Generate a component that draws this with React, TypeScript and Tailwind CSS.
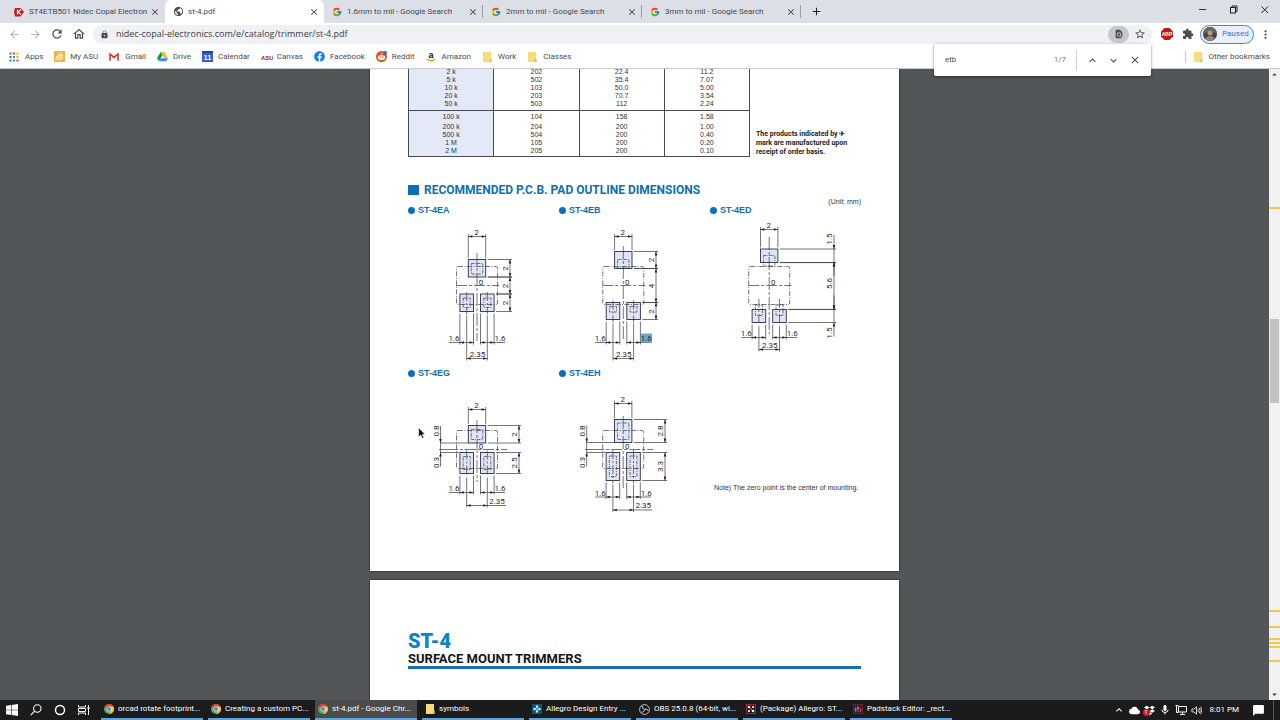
import type { ReactNode } from 'react';
import {
  MdArrowBack,
  MdArrowForward,
  MdRefresh,
  MdOutlineHome,
  MdLock,
  MdStarBorder,
  MdExtension,
  MdMoreVert,
  MdFindInPage,
  MdClose,
  MdAdd,
  MdExpandLess,
  MdExpandMore,
  MdCloud,
  MdMic,
  MdArrowDropUp,
  MdArrowDropDown,
  MdPublic,
  MdChatBubble,
} from 'react-icons/md';
import { FcGoogle } from 'react-icons/fc';
import { FaFacebook, FaDropbox } from 'react-icons/fa';

const UI = "font-['Roboto','Open_Sans',sans-serif]";
const NARROW = "font-['Roboto','Liberation_Sans',sans-serif]";

/* ---------- small icons ---------- */

function ChromeIcon() {
  return (
    <svg viewBox="0 0 24 24" className="size-[10px] shrink-0">
      <circle cx="12" cy="12" r="12" fill="#4caf50" />
      <path d="M12 12 1.6 6A12 12 0 0 1 22.4 6z" fill="#ea4335" />
      <path d="M12 6h10.4A12 12 0 0 1 12 24l5.2-9z" fill="#fbc02d" />
      <path d="M1.6 6 7 15l5-3V6z" fill="#ea4335" />
      <circle cx="12" cy="12" r="6" fill="#fff" />
      <circle cx="12" cy="12" r="4.6" fill="#4285f4" />
    </svg>
  );
}

function FolderIcon() {
  return (
    <svg viewBox="0 0 10 10" className="size-[10px] shrink-0">
      <path d="M1 0h8v6.5l.5.5v3H1z" fill="#f7dc7c" />
      <path d="M7.5 10V7.5L9.500 6.500V10z" fill="#e5bd4b" />
    </svg>
  );
}

function AppsIcon() {
  const colors = ['#db4437', '#db4437', '#f4b400', '#0f9d58', '#4285f4', '#f4b400', '#0f9d58', '#4285f4', '#db4437'];
  return (
    <svg viewBox="0 0 10 10" className="size-[10px] shrink-0">
      {colors.map((c, i) => (
        <rect key={i} x={0.5 + (i % 3) * 3.5} y={0.5 + Math.floor(i / 3) * 3.5} width="2" height="2" fill={c} />
      ))}
    </svg>
  );
}

function AsuIcon() {
  return (
    <svg viewBox="0 0 11 11" className="size-[11px] shrink-0">
      <rect width="11" height="11" rx="1" fill="#f0b43c" />
      <path d="M1.500 8.500 6 1.500M3 9.500 8 2M5 9l4-5M2 6l7-2M6 9.500 9.500 6" stroke="#fff" strokeWidth=".9" fill="none" />
    </svg>
  );
}

function GmailIcon() {
  return (
    <svg viewBox="0 0 10 10" className="size-[10px] shrink-0">
      <rect x=".5" y="1.500" width="9" height="7" fill="#f5f5f5" />
      <path d="M1 8.800V2l4 3.400L9 2v6.800" stroke="#d93025" strokeWidth="1.500" fill="none" />
    </svg>
  );
}

function DriveIcon() {
  return (
    <svg viewBox="0 0 24 22" className="size-[11px] shrink-0">
      <path d="M8 1h8l8 14h-8z" fill="#fbbc05" />
      <path d="M8 1 0 15l4 6.500L12 8z" fill="#0f9d58" />
      <path d="M8 15h16l-4 6.500H4z" fill="#4285f4" />
    </svg>
  );
}

function CalendarIcon() {
  return (
    <svg viewBox="0 0 11 11" className="size-[11px] shrink-0">
      <rect width="11" height="11" fill="#2f5fd0" />
      <rect width="11" height="2" fill="#1c46a8" />
      <text x="5.500" y="9" fontSize="7.500" fontWeight="700" textAnchor="middle" fill="#fff" fontFamily="Liberation Sans, sans-serif">
        11
      </text>
    </svg>
  );
}

function CanvasIcon() {
  return (
    <svg viewBox="0 0 12 10" className="h-[10px] w-[12px] shrink-0">
      <text x="6" y="7.500" fontSize="6" fontWeight="700" fontStyle="italic" textAnchor="middle" fill="#a3123c" fontFamily="Liberation Sans, sans-serif">
        ASU
      </text>
    </svg>
  );
}

function RedditIcon() {
  return (
    <svg viewBox="0 0 11 11" className="size-[11px] shrink-0">
      <circle cx="5.500" cy="5.500" r="5.500" fill="#e8501c" />
      <ellipse cx="5.500" cy="6.400" rx="3.600" ry="2.500" fill="#fff" />
      <circle cx="4.200" cy="6" r=".7" fill="#e8501c" />
      <circle cx="6.800" cy="6" r=".7" fill="#e8501c" />
      <path d="M5.500 4 6 2h1.500" stroke="#fff" strokeWidth=".5" fill="none" />
      <circle cx="9" cy="2" r="2" fill="#2d6fb5" />
    </svg>
  );
}

function AmazonIcon() {
  return (
    <svg viewBox="0 0 10 11" className="h-[11px] w-[10px] shrink-0">
      <text x="5" y="6.800" fontSize="9" fontWeight="700" textAnchor="middle" fill="#111" fontFamily="Liberation Sans, sans-serif">
        a
      </text>
      <path d="M.8 7.800c2.500 2 5.800 2 8.200.3" stroke="#f90" strokeWidth="1.300" fill="none" />
    </svg>
  );
}

function NidecIcon() {
  return (
    <svg viewBox="0 0 10 10" className="size-[10px] shrink-0">
      <path d="M1 1h5.500L10 5 6.500 9.500H1L0 5z" fill="#c8171e" />
      <path d="M3.500 2.500v5M7 2.500 4 5l3 2.500" stroke="#fff" strokeWidth="1.200" fill="none" />
    </svg>
  );
}

function AbpIcon() {
  return (
    <svg viewBox="0 0 12 12" className="size-[12px]">
      <path d="M3.500 0h5L12 3.500v5L8.500 12h-5L0 8.500v-5z" fill="#c4161c" />
      <text x="6" y="7.900" fontSize="5" fontWeight="700" textAnchor="middle" fill="#fff" fontFamily="Liberation Sans, sans-serif">
        ABP
      </text>
    </svg>
  );
}

function AllegroIcon() {
  return (
    <svg viewBox="0 0 10 10" className="size-[10px] shrink-0">
      <rect width="10" height="10" fill="#12536f" />
      <path d="M5 1.500v7M1.500 5h7" stroke="#e8f6ff" strokeWidth="2.200" />
      <rect x="3.500" y="3.500" width="3" height="3" fill="#2aa5dc" />
    </svg>
  );
}

function ObsIcon() {
  return (
    <svg viewBox="0 0 11 11" className="size-[11px] shrink-0">
      <circle cx="5.500" cy="5.500" r="4.900" fill="#151515" stroke="#d8d8d8" strokeWidth=".9" />
      <path d="M5.500 5.500C3.500 5 3.200 3.200 4 2M5.500 5.500C7.500 4.500 9 5.500 9 6.800M5.500 5.500C5.500 7.500 4 8.500 2.600 8" stroke="#d8d8d8" strokeWidth="1" fill="none" />
    </svg>
  );
}

function PackageIcon() {
  return (
    <svg viewBox="0 0 10 10" className="size-[10px] shrink-0">
      <rect x=".4" y=".4" width="9.200" height="9.200" fill="#2b1018" stroke="#c22a4a" strokeWidth=".8" />
      <circle cx="3" cy="3" r="1.300" fill="#fff" />
      <circle cx="7" cy="3" r="1.100" fill="#fff" />
      <circle cx="3" cy="7" r="1.100" fill="#fff" />
      <circle cx="7" cy="7" r="1.300" fill="#fff" />
      <path d="m3 3 4 4" stroke="#fff" strokeWidth=".6" />
    </svg>
  );
}

function PadstackIcon() {
  return (
    <svg viewBox="0 0 10 10" className="size-[10px] shrink-0">
      <rect x=".4" y=".4" width="9.200" height="9.200" fill="#26232e" stroke="#7a2440" strokeWidth=".8" />
      <path d="M2.500 3v5M5 2v6M7.500 4v4" stroke="#d13b5e" strokeWidth="1.200" />
      <path d="M4 4h2M2 5.500h1.500" stroke="#8fb7e8" strokeWidth="1" />
    </svg>
  );
}

/* ---------- browser chrome ---------- */

function Tab({ icon, title, active = false, divider = false }: { icon: ReactNode; title: string; active?: boolean; divider?: boolean }) {
  return (
    <div className={`relative flex h-full w-[159px] items-center pr-[5px] pl-[8px] ${active ? 'rounded-t-[6px] bg-white' : ''}`}>
      {divider && <span className="absolute right-0 h-[13px] w-px bg-[#9b9fa8]" />}
      <span className="flex w-[15px] shrink-0 items-center">{icon}</span>
      <a href="#tab" className="min-w-0 flex-1 text-[8px] whitespace-nowrap text-[#45494e]">
        {title}
      </a>
      <button aria-label={`Close ${title}`} className="ml-[6px] flex text-[#3c4043]">
        <MdClose className="size-[10px]" />
      </button>
    </div>
  );
}

function TabStrip() {
  return (
    <header className="flex h-[23px] shrink-0 items-center bg-[#dcdfe6] pl-[6px]">
      <Tab icon={<NidecIcon />} title="ST4ETB501 Nidec Copal Electron" />
      <Tab icon={<MdPublic className="size-[11px] text-[#4a4e52]" />} title="st-4.pdf" active />
      <Tab icon={<FcGoogle className="size-[10px]" />} title="1.6mm to mil - Google Search" divider />
      <Tab icon={<FcGoogle className="size-[10px]" />} title="2mm to mil - Google Search" divider />
      <Tab icon={<FcGoogle className="size-[10px]" />} title="3mm to mil - Google Search" divider />
      <button aria-label="New tab" className="ml-[9px] flex text-[#202124]">
        <MdAdd className="size-[13px]" />
      </button>
      <div className="ml-auto flex h-full items-center gap-[20px] pr-[10px] pb-[4px] text-[#222]">
        <button aria-label="Minimize" className="flex size-[11px] items-center justify-center">
          <span className="h-px w-[7px] bg-[#333]" />
        </button>
        <button aria-label="Restore" className="flex">
          <svg viewBox="0 0 11 11" className="size-[11px]" fill="none" stroke="#222" strokeWidth="1">
            <rect x="2.500" y="3.500" width="5" height="5.500" />
            <path d="M4 3.500V2h5v5.500H7.500" />
          </svg>
        </button>
        <button aria-label="Close window" className="flex">
          <svg viewBox="0 0 11 11" className="size-[11px]" stroke="#222" strokeWidth="1">
            <path d="m2.500 2.500 6.500 6.500M9 2.500 2.500 9" />
          </svg>
        </button>
      </div>
    </header>
  );
}

function Toolbar() {
  return (
    <div className="flex h-[22px] shrink-0 items-center bg-white pl-[8px] text-[#4a4d51]">
      <nav className="flex items-center gap-[8px]">
        <button aria-label="Back" className="flex text-[#b4b7ba]"><MdArrowBack className="size-[13px]" /></button>
        <button aria-label="Forward" className="flex text-[#b4b7ba]"><MdArrowForward className="size-[13px]" /></button>
        <button aria-label="Reload" className="flex"><MdRefresh className="size-[14px]" /></button>
        <button aria-label="Home" className="flex"><MdOutlineHome className="size-[14px]" /></button>
      </nav>
      <div className="ml-[7px] flex h-[19px] flex-1 items-center rounded-full bg-[#f0f1f4] pl-[7px]">
        <MdLock className="size-[9px] shrink-0" />
        <input
          aria-label="Address"
          defaultValue="nidec-copal-electronics.com/e/catalog/trimmer/st-4.pdf"
          className="ml-[7px] min-w-0 flex-1 bg-transparent font-['Open_Sans','Noto_Sans',sans-serif] text-[9px] text-[#3c4043] outline-none"
        />
        <button aria-label="Find in page" className="flex h-[17px] w-[21px] items-center justify-center rounded-full bg-[#c6c7ca]">
          <MdFindInPage className="size-[10px]" />
        </button>
        <button aria-label="Bookmark" className="mr-[6px] ml-[5px] flex"><MdStarBorder className="size-[12px]" /></button>
      </div>
      <button aria-label="Ad blocker" className="ml-[9px] flex"><AbpIcon /></button>
      <button aria-label="Extensions" className="ml-[9px] flex"><MdExtension className="size-[12px]" /></button>
      <button className="ml-[6px] flex h-[19px] w-[54px] items-center gap-[5px] rounded-full border border-[#4a86c8] bg-[#e9f0fc] pl-[2px] text-[8px] text-[#3b73c4]">
        <svg viewBox="0 0 14 14" className="size-[14px]">
          <circle cx="7" cy="7" r="7" fill="#4a4540" />
          <path d="M0 7a7 7 0 0 1 14 0c-3-3-10-3-14 0z" fill="#6d665c" />
          <circle cx="7" cy="6" r="2.500" fill="#b79c86" />
          <path d="M2.500 12c1-4 8-4 9 0a7 7 0 0 1-9 0z" fill="#8d8a86" />
        </svg>
        Paused
      </button>
      <button aria-label="Menu" className="mr-[8px] ml-[5px] flex"><MdMoreVert className="size-[13px]" /></button>
    </div>
  );
}

const bookmarks: { label: string; icon: ReactNode }[] = [
  { label: 'Apps', icon: <AppsIcon /> },
  { label: 'My ASU', icon: <AsuIcon /> },
  { label: 'Gmail', icon: <GmailIcon /> },
  { label: 'Drive', icon: <DriveIcon /> },
  { label: 'Calendar', icon: <CalendarIcon /> },
  { label: 'Canvas', icon: <CanvasIcon /> },
  { label: 'Facebook', icon: <FaFacebook className="size-[11px] shrink-0 text-[#1877f2]" /> },
  { label: 'Reddit', icon: <RedditIcon /> },
  { label: 'Amazon', icon: <AmazonIcon /> },
  { label: 'Work', icon: <FolderIcon /> },
  { label: 'Classes', icon: <FolderIcon /> },
];

function BookmarkBar() {
  return (
    <nav className="flex h-[24px] shrink-0 items-center gap-[11px] border-b border-[#c9cacc] bg-white pr-[10px] pl-[9px] text-[8px] text-[#4a4d51]">
      {bookmarks.map((b) => (
        <a key={b.label} href="#bookmark" className="flex items-center whitespace-nowrap">
          <span className="flex w-[16px] items-center">{b.icon}</span>
          {b.label}
        </a>
      ))}
      <a href="#other" className="ml-auto flex items-center gap-[6px] border-l border-[#c9cacc] pl-[7px]">
        <FolderIcon />
        Other bookmarks
      </a>
    </nav>
  );
}

function FindBar() {
  return (
    <form className="absolute top-[44px] right-[129px] flex h-[32px] w-[217px] items-center rounded-b-[2px] bg-white pl-[11px] text-[8px] text-[#4a4d51] shadow-[0_1px_3px_rgba(0,0,0,0.5)]">
      <input aria-label="Find" defaultValue="etb" className="min-w-0 flex-1 bg-transparent outline-none" />
      <span className="mr-[10px] text-[#74777b]">1/7</span>
      <span className="h-[21px] w-px bg-[#cfd0d2]" />
      <button type="button" aria-label="Previous match" className="ml-[9px] flex"><MdExpandLess className="size-[13px]" /></button>
      <button type="button" aria-label="Next match" className="ml-[8px] flex"><MdExpandMore className="size-[13px]" /></button>
      <button type="button" aria-label="Close find bar" className="mr-[10px] ml-[9px] flex"><MdClose className="size-[12px]" /></button>
    </form>
  );
}

/* ---------- datasheet drawings ---------- */

const INK = '#3a3a42';

type Dim = { from: number; to: number; label: string; at: number; outside?: boolean };

type PadSpec = {
  view: string;
  cx: number;
  top: [number, number];
  topHole: [number, number];
  body: [number, number];
  axis: number;
  axisHalf: [number, number];
  low: [number, number];
  lowHole: [number, number];
  centre: [number, number];
  topDim: number;
  padDim: number;
  pitchDim: number;
  pitchLabel: number;
  rightX: number;
  rights: Dim[];
  left?: boolean;
  marked?: boolean;
};

function Arrow({ x, y, dir }: { x: number; y: number; dir: 'l' | 'r' | 'u' | 'd' }) {
  const points = {
    l: `${x},${y} ${x + 4},${y - 1.3} ${x + 4},${y + 1.3}`,
    r: `${x},${y} ${x - 4},${y - 1.3} ${x - 4},${y + 1.3}`,
    u: `${x},${y} ${x - 1.3},${y + 4} ${x + 1.3},${y + 4}`,
    d: `${x},${y} ${x - 1.3},${y - 4} ${x + 1.3},${y - 4}`,
  };
  return <polygon points={points[dir]} fill="#222" stroke="none" />;
}

function Label({ x, y, children, turned = false }: { x: number; y: number; children: ReactNode; turned?: boolean }) {
  return (
    <text x={x} y={y} textAnchor="middle" transform={turned ? `rotate(-90 ${x} ${y})` : undefined} fill="#2a2a2e" stroke="none">
      {children}
    </text>
  );
}

function PadDrawing({ s }: { s: PadSpec }) {
  const lows = [s.cx - 10.3, s.cx + 10.3];
  const edges = [lows[0] - 6.8, lows[0] + 6.8, lows[1] - 6.8, lows[1] + 6.8];
  const tl = s.cx - 8.7;
  const tr = s.cx + 8.7;
  return (
    <svg viewBox={s.view} className={`block w-full text-[8px] ${NARROW}`} fill="none" stroke={INK} strokeWidth=".7">
      {/* pads */}
      <g fill="#dfe5f5" stroke="#2c2e44" strokeWidth=".9">
        <rect x={tl} y={s.top[0]} width="17.400" height={s.top[1] - s.top[0]} />
        {lows.map((x) => (
          <rect key={x} x={x - 6.8} y={s.low[0]} width="13.600" height={s.low[1] - s.low[0]} />
        ))}
      </g>
      {/* terminals */}
      <g strokeDasharray="3 1 1 1">
        <rect x={s.cx - 5.7} y={s.topHole[0]} width="11.400" height={s.topHole[1] - s.topHole[0]} />
        {lows.map((x) => (
          <rect key={x} x={x - 3.5} y={s.lowHole[0]} width="7" height={s.lowHole[1] - s.lowHole[0]} />
        ))}
      </g>
      {/* body and centre lines */}
      <rect x={s.cx - 20.5} y={s.body[0]} width="41" height={s.body[1] - s.body[0]} rx="1.500" strokeDasharray="5 1.500 1 1.500" />
      <path d={`M${s.cx} ${s.centre[0]}V${s.centre[1]}`} strokeDasharray="13 2 3 2" />
      <path d={`M${s.cx - s.axisHalf[0]} ${s.axis}H${s.cx + s.axisHalf[1]}`} strokeDasharray="11 2 3 2" />
      {lows.map((x) => (
        <g key={x}>
          <path d={`M${x} ${s.lowHole[0] - 6}V${s.low[1] + 3}`} strokeDasharray="9 2 2 2" />
          <path d={`M${x} ${s.low[1] + 4}V${s.pitchDim + 2}`} />
        </g>
      ))}
      <Label x={s.cx + 4} y={s.axis - 1}>0</Label>
      {/* top width */}
      <path d={`M${tl} ${s.topDim - 2.5}V${s.top[0] - 1.5}M${tr} ${s.topDim - 2.5}V${s.top[0] - 1.5}M${tl} ${s.topDim}H${tr}`} />
      <Arrow x={tl} y={s.topDim} dir="l" />
      <Arrow x={tr} y={s.topDim} dir="r" />
      <Label x={s.cx - 0.5} y={s.topDim - 1.5}>2</Label>
      {/* pad widths */}
      {edges.map((x) => (
        <path key={x} d={`M${x} ${s.low[1] + 2}V${s.padDim + 2}`} />
      ))}
      <path d={`M${s.cx - 28} ${s.padDim}H${edges[1]}M${edges[2]} ${s.padDim}H${s.cx + 28}`} />
      <Arrow x={edges[0]} y={s.padDim} dir="l" />
      <Arrow x={edges[1]} y={s.padDim} dir="r" />
      <Arrow x={edges[2]} y={s.padDim} dir="l" />
      <Arrow x={edges[3]} y={s.padDim} dir="r" />
      {s.marked && <rect x={s.cx + 17.700} y={s.padDim - 9} width="11" height="9" fill="#6fa8cf" stroke="none" />}
      <Label x={s.cx - 23} y={s.padDim - 1.5}>1.6</Label>
      <Label x={s.cx + 23} y={s.padDim - 1.5}>1.6</Label>
      {/* pitch */}
      <path d={`M${lows[0]} ${s.pitchDim}H${Math.max(lows[1], s.cx + s.pitchLabel + 9 - (s.pitchLabel < 5 ? 9 : 0))}`} />
      <Arrow x={lows[0]} y={s.pitchDim} dir="l" />
      <Arrow x={lows[1]} y={s.pitchDim} dir="r" />
      <Label x={s.cx + s.pitchLabel} y={s.pitchDim - 2}>2.35</Label>
      {/* right side dimensions */}
      {s.rights.map((d) => (
        <g key={d.from}>
          <path d={`M${d.from < s.axis ? tr + 2 : edges[3] + 2} ${d.from}H${s.rightX + 2}M${d.to <= s.axis ? tr + 2 : edges[3] + 2} ${d.to}H${s.rightX + 2}`} />
          {d.outside ? (
            <>
              <path d={`M${s.rightX} ${d.from - 14}V${d.to + 14}`} />
              <Arrow x={s.rightX} y={d.from} dir="d" />
              <Arrow x={s.rightX} y={d.to} dir="u" />
            </>
          ) : (
            <>
              <path d={`M${s.rightX} ${d.from}V${d.to}`} />
              <Arrow x={s.rightX} y={d.from} dir="u" />
              <Arrow x={s.rightX} y={d.to} dir="d" />
            </>
          )}
          <Label x={s.rightX - 2} y={d.at} turned>{d.label}</Label>
        </g>
      ))}
      {/* offsets from the zero line */}
      {s.left && (
        <>
          <path d={`M${s.cx - 36.500} ${s.top[1]}H${s.cx - 9}M${s.cx - 36.500} ${s.low[0]}H${s.cx - 18}M${s.cx - 36.500} ${s.top[1] - 17}V${s.low[0] + 14}M${s.cx - 38} ${s.axis}H${s.cx - 30}`} />
          <Arrow x={s.cx - 36.5} y={s.top[1]} dir="d" />
          <Arrow x={s.cx - 36.5} y={s.low[0]} dir="u" />
          <Label x={s.cx - 38.5} y={431} turned>0.8</Label>
          <Label x={s.cx - 38.5} y={462.500} turned>0.3</Label>
        </>
      )}
    </svg>
  );
}

const drawings: { name: string; spec: PadSpec }[] = [
  {
    name: 'ST-4EA',
    spec: {
      view: '408 216 151 148', cx: 477, top: [259.5, 277], topHole: [263.5, 274], body: [266.5, 304.5], axis: 285.5,
      axisHalf: [21, 22], low: [294, 311.5], lowHole: [298, 307.5], centre: [253, 341], topDim: 236.5, padDim: 342.5,
      pitchDim: 358.5, pitchLabel: 0.5, rightX: 510,
      rights: [
        { from: 259.5, to: 277, label: '2', at: 268.5 },
        { from: 277, to: 294, label: '2', at: 286 },
        { from: 294, to: 311.5, label: '2', at: 303 },
      ],
    },
  },
  {
    name: 'ST-4EB',
    spec: {
      view: '559 216 151 148', cx: 623.3, top: [251.5, 268.5], topHole: [259.5, 268], body: [266.5, 304.5], axis: 285.5,
      axisHalf: [21, 22], low: [302.5, 319.5], lowHole: [306.5, 312], centre: [246, 341], topDim: 236.5, padDim: 342.5,
      pitchDim: 358.5, pitchLabel: 0.5, rightX: 656, marked: true,
      rights: [
        { from: 251.5, to: 268.5, label: '2', at: 260 },
        { from: 268.5, to: 302.5, label: '4', at: 286 },
        { from: 302.5, to: 319.5, label: '2', at: 311.5 },
      ],
    },
  },
  {
    name: 'ST-4ED',
    spec: {
      view: '710 216 151 148', cx: 769.2, top: [249, 262.5], topHole: [255.5, 266], body: [266.5, 304.5], axis: 285.5,
      axisHalf: [21, 22], low: [309.5, 322.5], lowHole: [305, 315.5], centre: [237, 334], topDim: 229.5, padDim: 337.5,
      pitchDim: 349.5, pitchLabel: 0.5, rightX: 834,
      rights: [
        { from: 249, to: 262.5, label: '1.5', at: 239, outside: true },
        { from: 262.6, to: 309.4, label: '5.6', at: 283.5 },
        { from: 309.5, to: 322.5, label: '1.5', at: 333, outside: true },
      ],
    },
  },
  {
    name: 'ST-4EG',
    spec: {
      view: '408 379 151 141', cx: 477, top: [425.5, 443], topHole: [429.5, 439.5], body: [430.5, 468.5], axis: 449.5,
      axisHalf: [30, 30], low: [452.5, 473.5], lowHole: [456.5, 469.5], centre: [420, 482], topDim: 409.5, padDim: 492.5,
      pitchDim: 505.5, pitchLabel: 20, rightX: 519, left: true,
      rights: [
        { from: 425.5, to: 443, label: '2', at: 434.5 },
        { from: 452.5, to: 473.5, label: '2.5', at: 463 },
      ],
    },
  },
  {
    name: 'ST-4EH',
    spec: {
      view: '559 379 151 141', cx: 623.2, top: [419.5, 442.5], topHole: [423, 439.5], body: [430.5, 468.5], axis: 449.5,
      axisHalf: [30, 30], low: [452.5, 480.5], lowHole: [456, 476.5], centre: [416, 488], topDim: 403.5, padDim: 497,
      pitchDim: 510, pitchLabel: 20, rightX: 665, left: true,
      rights: [
        { from: 419.5, to: 442.5, label: '2.8', at: 431 },
        { from: 452.5, to: 480.5, label: '3.3', at: 466.5 },
      ],
    },
  },
];

/* ---------- datasheet pages ---------- */

const groups: { pad: string; rows: string[][] }[] = [
  {
    pad: 'h-[2px]',
    rows: [
      ['2 k', '202', '22.4', '11.2'],
      ['5 k', '502', '35.4', '7.07'],
      ['10 k', '103', '50.0', '5.00'],
      ['20 k', '203', '70.7', '3.54'],
      ['50 k', '503', '112', '2.24'],
    ],
  },
  { pad: 'h-[2px]', rows: [['100 k', '104', '158', '1.58']] },
  {
    pad: 'h-px',
    rows: [
      ['200 k', '204', '200', '1.00'],
      ['500 k', '504', '200', '0.40'],
      ['1 M', '105', '200', '0.20'],
      ['2 M', '205', '200', '0.10'],
    ],
  },
];

function RatingsTable() {
  const cell = 'border-x border-[#4a4a52] p-0 first:bg-[#e3e9f6]';
  return (
    <table className="-mt-px w-[342px] shrink-0 table-fixed border-collapse border-b border-[#4a4a52] text-center text-[7px] leading-[8px] text-[#333]">
      {groups.map((g, gi) => (
        <tbody key={gi} className={gi === 1 ? 'border-t border-[#4a4a52]' : ''}>
          {gi === 1 && (
            <tr className="h-[3px]">
              {g.rows[0].map((_, i) => (
                <td key={i} className={cell} />
              ))}
            </tr>
          )}
          {g.rows.map((r) => (
            <tr key={r[0]} className="h-[8px]">
              {r.map((c, i) => (
                <td key={i} className={cell}>{c}</td>
              ))}
            </tr>
          ))}
          <tr className={g.pad}>
            {g.rows[0].map((_, i) => (
              <td key={i} className={cell} />
            ))}
          </tr>
        </tbody>
      ))}
    </table>
  );
}

function Datasheet() {
  return (
    <main className="relative flex min-w-0 flex-1 flex-col items-center gap-[9px] overflow-hidden bg-[#525659] font-['Liberation_Sans',Arial,sans-serif]">
      <article className="h-[502px] w-[529px] shrink-0 bg-white px-[38px] shadow-[0_0_2px_rgba(0,0,0,0.7)]">
        <div className="flex items-end gap-[6px]">
          <RatingsTable />
          <p className={`text-[7px] leading-[9px] font-bold whitespace-nowrap text-[#222] ${NARROW}`}>
            The products indicated by ✈
            <br />
            mark are manufactured upon
            <br />
            receipt of order basis.
          </p>
        </div>
        <h2 className={`mt-[26px] flex h-[15px] items-center gap-[5px] text-[12px] font-bold text-[#0b70b5] ${NARROW}`}>
          <span className="h-[10px] w-[11px] bg-[#0b70b5]" />
          RECOMMENDED P.C.B. PAD OUTLINE DIMENSIONS
        </h2>
        <p className="text-right text-[7px] leading-[8px] text-[#333]">(Unit: mm)</p>
        <div className="grid grid-cols-3 gap-y-[5px]">
          {drawings.map((d) => (
            <section key={d.name}>
              <h3 className="flex h-[10px] items-center gap-[3px] text-[9px] font-bold text-[#0b70b5]">
                <span className="size-[7px] rounded-full bg-[#0b70b5]" />
                {d.name}
              </h3>
              <PadDrawing s={d.spec} />
            </section>
          ))}
          <p className="pt-[115px] pl-[4px] text-[7px] leading-[8px] whitespace-nowrap text-[#333]">
            Note) The zero point is the center of mounting.
          </p>
        </div>
      </article>
      <article className={`w-[529px] flex-1 bg-white px-[38px] pt-[50px] shadow-[0_0_2px_rgba(0,0,0,0.7)] ${NARROW}`}>
        <h1 className="border-b-[3px] border-[#1b6fad]">
          <span className="block text-[20px] leading-[22px] font-black text-[#1180c4]">ST-4</span>
          <span className="block text-[13px] leading-[14px] font-bold text-[#151515]">SURFACE MOUNT TRIMMERS</span>
        </h1>
      </article>
      <svg viewBox="0 0 8 12" className="absolute top-[358px] left-[418px] h-[12px] w-[8px]">
        <path d="M.7.700v9.300l2.100-2 1.600 3.400 1.400-.6-1.600-3.300h2.900z" fill="#111" stroke="#fff" strokeWidth=".5" />
      </svg>
    </main>
  );
}

const matches = ['top-[138px]', 'top-[541px]', 'top-[557px]', 'top-[569px]', 'top-[573px]', 'top-[577px]', 'top-[591px]'];

function Scrollbar() {
  return (
    <aside className="relative flex w-[11px] flex-col items-center justify-between bg-[#f1f1f1] text-[#404040]">
      <MdArrowDropUp className="size-[11px]" />
      <MdArrowDropDown className="size-[11px]" />
      <span className="absolute top-[250px] h-[84px] w-[9px] bg-[#c1c1c1]" />
      {matches.map((m) => (
        <span key={m} className={`absolute h-[2px] w-full bg-[#f0c850] ${m}`} />
      ))}
    </aside>
  );
}

/* ---------- taskbar ---------- */

const windows: { label: string; icon: ReactNode; active?: boolean }[] = [
  { label: 'orcad rotate footprint...', icon: <ChromeIcon /> },
  { label: 'Creating a custom PC...', icon: <ChromeIcon /> },
  { label: 'st-4.pdf - Google Chr...', icon: <ChromeIcon />, active: true },
  { label: 'symbols', icon: <FolderIcon /> },
  { label: 'Allegro Design Entry ...', icon: <AllegroIcon /> },
  { label: 'OBS 25.0.8 (64-bit, wi...', icon: <ObsIcon /> },
  { label: '(Package) Allegro: ST...', icon: <PackageIcon /> },
  { label: 'Padstack Editor: _rect...', icon: <PadstackIcon /> },
];

function Taskbar() {
  return (
    <footer className="flex h-[20px] shrink-0 items-center bg-[#1b1b1b] text-[8px] text-white">
      <div className="flex items-center gap-[12px] pr-[11px] pl-[6px]">
        <button aria-label="Start" className="flex">
          <svg viewBox="0 0 12 12" className="size-[12px]" fill="#fff">
            <path d="M0 1.700 5.400 1v4.700H0zM6 .9 12 0v5.700H6zM0 6.300h5.400V11L0 10.300zM6 6.300h6V12l-6-.9z" />
          </svg>
        </button>
        <button aria-label="Search" className="flex">
          <svg viewBox="0 0 12 12" className="size-[12px]" fill="none" stroke="#fff" strokeWidth="1.100">
            <circle cx="7.300" cy="4.500" r="3.700" />
            <path d="M4.600 7.200.8 11.200" />
          </svg>
        </button>
        <button aria-label="Cortana" className="flex">
          <svg viewBox="0 0 12 12" className="size-[12px]" fill="none" stroke="#fff" strokeWidth="1.500">
            <circle cx="6" cy="6" r="4.500" />
          </svg>
        </button>
        <button aria-label="Task view" className="flex">
          <svg viewBox="0 0 12 12" className="size-[12px]" fill="none" stroke="#fff" strokeWidth="1">
            <path d="M.5 1v2h7V1M.5 11V9h7v2M.5 4.500h7v3h-7zM10.500 1v10" />
            <path d="M10.500 3v2" strokeWidth="2" />
          </svg>
        </button>
      </div>
      <div className="flex h-full gap-[5px]">
        {windows.map((w) => (
          <button
            key={w.label}
            className={`flex h-full w-[102px] items-center gap-[4px] border-b-2 border-[#5fa3d9] pl-[3px] whitespace-nowrap ${w.active ? 'bg-[#4b4b4b]' : ''}`}
          >
            {w.icon}
            {w.label}
          </button>
        ))}
      </div>
      <div className="ml-auto flex h-full items-center gap-[4px]">
        <MdExpandLess className="size-[12px]" />
        <MdCloud className="size-[11px]" />
        <span className="relative flex">
          <FaDropbox className="size-[11px]" />
          <span className="absolute top-[4px] -left-px flex size-[7px] items-center justify-center rounded-full bg-[#d3182b] text-[6px] leading-none">1</span>
        </span>
        <MdMic className="size-[12px]" />
        <svg viewBox="0 0 12 12" className="size-[12px]" fill="none" stroke="#fff" strokeWidth="1">
          <path d="M3.500 2.500h8v5.500h-8zM5 10.500h5M7.500 8v2.500M.5 1.500h3M1.500 1.500v7h2" />
        </svg>
        <svg viewBox="0 0 12 12" className="size-[11px]" fill="none" stroke="#fff" strokeWidth=".9">
          <path d="M1 4.500h2L6 2v8L3 7.500H1zM7.500 4.500q1 1.500 0 3M9 3q2 3 0 6M10.500 2q2.500 4 0 8" />
        </svg>
        <time className="ml-[4px] whitespace-nowrap">8:01 PM</time>
        <MdChatBubble className="ml-[9px] size-[13px]" />
        <span className="ml-[4px] h-full w-px bg-[#555]" />
        <span className="w-[2px]" />
      </div>
    </footer>
  );
}

export default function App() {
  return (
    <div className={`relative flex h-screen min-h-0 flex-col overflow-hidden bg-[#525659] ${UI}`}>
      <TabStrip />
      <Toolbar />
      <BookmarkBar />
      <div className="flex min-h-0 flex-1">
        <Datasheet />
        <Scrollbar />
      </div>
      <Taskbar />
      <FindBar />
    </div>
  );
}
